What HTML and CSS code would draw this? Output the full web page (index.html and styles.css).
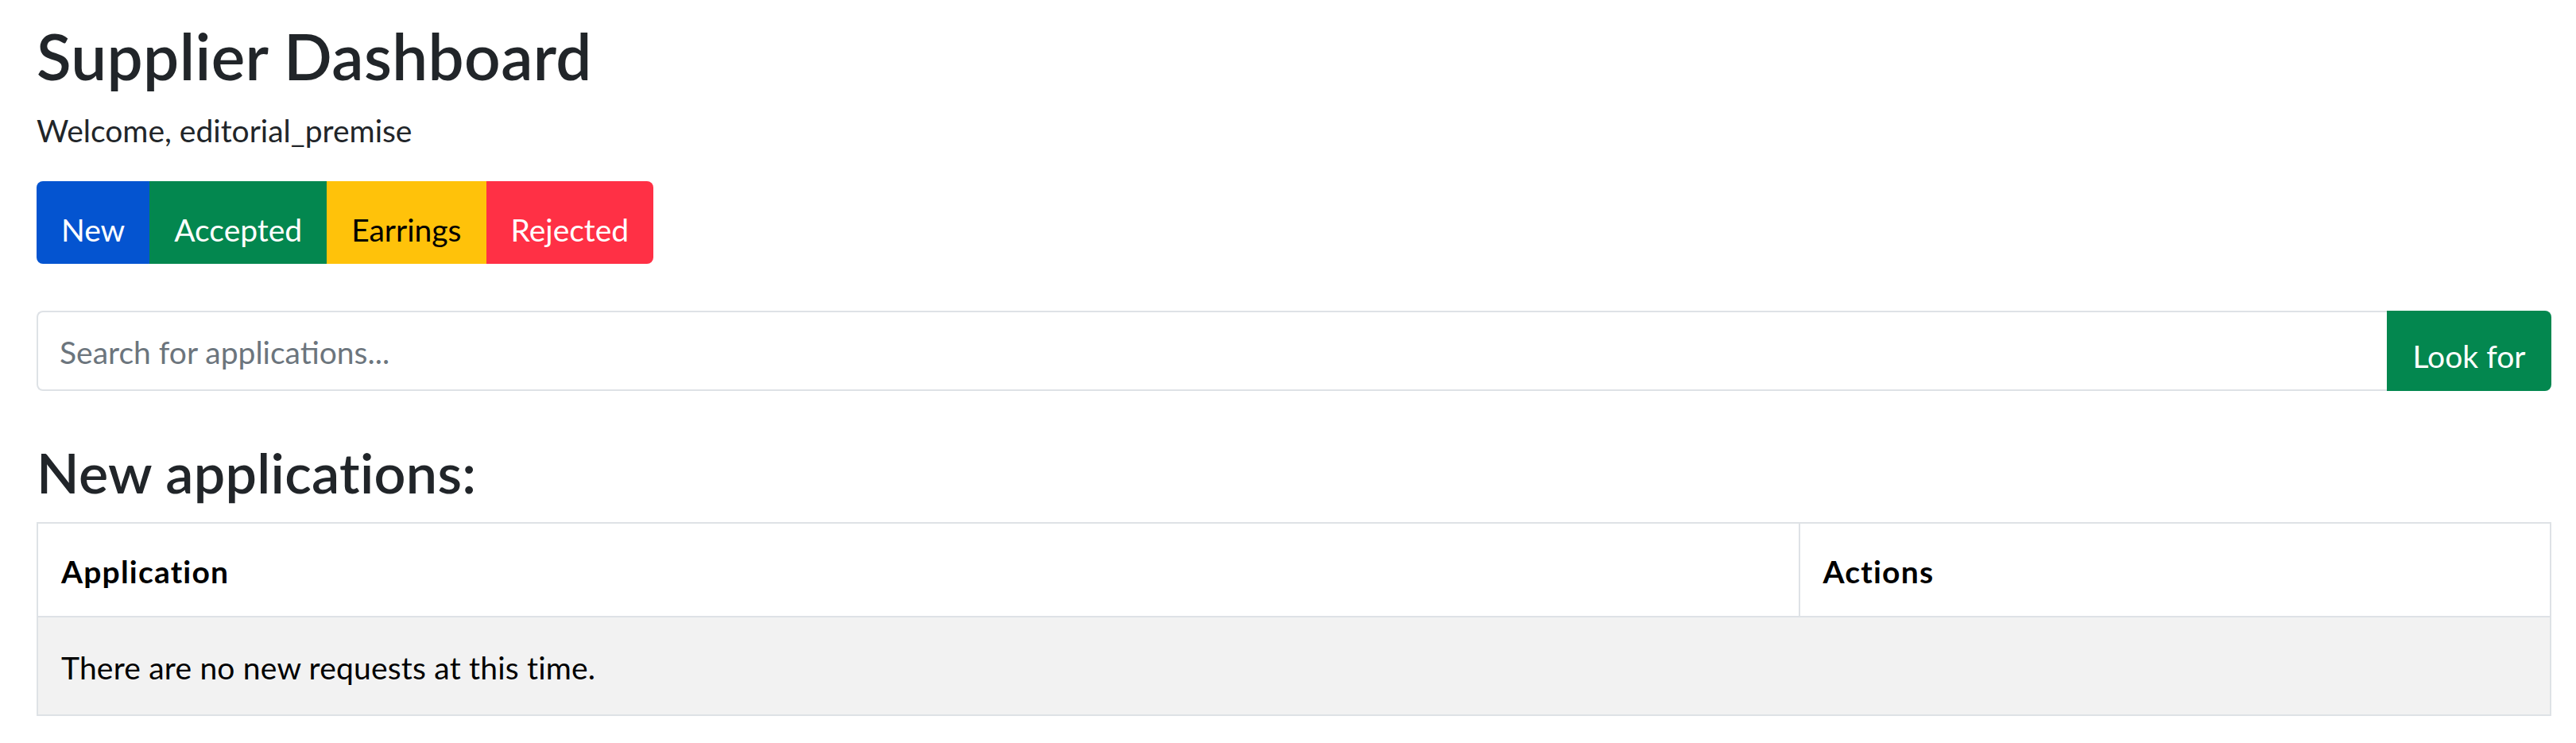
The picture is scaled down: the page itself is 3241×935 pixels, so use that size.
FILE: index.html
```html
<!DOCTYPE html>
<html lang="en">
<head>
<meta charset="utf-8">
<title>Supplier Dashboard</title>
<link rel="stylesheet" href="styles.css">
</head>
<body>
<main class="page">
  <h1 class="title">Supplier Dashboard</h1>
  <p class="welcome">Welcome, editorial_premise</p>
  <div class="btn-group">
    <button class="btn btn-new">New</button>
    <button class="btn btn-accepted">Accepted</button>
    <button class="btn btn-earrings">Earrings</button>
    <button class="btn btn-rejected">Rejected</button>
  </div>
  <form class="search">
    <input class="search-input" type="text" placeholder="Search for applications...">
    <button class="search-btn" type="button">Look for</button>
  </form>
  <h2 class="section-title">New applications:</h2>
  <table class="apps">
    <thead>
      <tr><th class="col-app">Application</th><th>Actions</th></tr>
    </thead>
    <tbody>
      <tr><td colspan="2">There are no new requests at this time.</td></tr>
    </tbody>
  </table>
</main>
</body>
</html>
```
FILE: styles.css
```css
html, body {
  margin: 0;
  padding: 0;
  background: #fff;
}
body {
  font-family: Lato, "Liberation Sans", sans-serif;
  color: #212529;
}
.page {
  padding: 22px 31px 0 46px;
}
.title {
  margin: 0;
  font-size: 80px;
  font-weight: 600;
  letter-spacing: 0.4px;
  line-height: 1.2;
}
.welcome {
  margin: 19px 0 0;
  font-size: 39px;
  line-height: 54px;
}
.btn-group {
  display: flex;
  margin-top: 37px;
}
.btn {
  border: 0;
  margin: 0;
  font-family: inherit;
  font-size: 39px;
  line-height: 52px;
  padding: 35px 31px 17px;
  color: #fff;
}
.btn-new {
  background: #0454d0;
  border-radius: 8px 0 0 8px;
}
.btn-accepted { background: #03874f; }
.btn-earrings { background: #ffc20a; color: #000; }
.btn-rejected {
  background: #ff3045;
  border-radius: 0 8px 8px 0;
}
.search {
  display: flex;
  margin: 59px 0 0;
  height: 101px;
}
.search-input {
  flex: 1;
  box-sizing: border-box;
  height: 101px;
  margin: 0;
  border: 2px solid #dee2e6;
  border-right: 0;
  border-radius: 8px 0 0 8px;
  padding: 2px 27px 0;
  font-family: inherit;
  font-size: 39px;
  color: #212529;
  outline: none;
}
.search-input::placeholder {
  color: #6c757d;
}
.search-btn {
  box-sizing: border-box;
  width: 207px;
  height: 101px;
  border: 0;
  margin: 0;
  padding: 12px 0 0;
  border-radius: 0 8px 8px 0;
  background: #03874f;
  color: #fff;
  font-family: inherit;
  font-size: 39px;
}
.section-title {
  margin: 60px 0 0;
  font-size: 70px;
  font-weight: 600;
  letter-spacing: 0.3px;
  line-height: 1.2;
}
.apps {
  width: 100%;
  margin-top: 21px;
  border-collapse: collapse;
  border: 2px solid #dee2e6;
  font-size: 39px;
}
.apps th, .apps td {
  border: 2px solid #dee2e6;
  text-align: left;
  padding: 4px 29px 0;
}
.apps th {
  height: 112px;
  font-weight: 700;
  letter-spacing: 1.2px;
  color: #000;
}
.col-app {
  width: 70.1%;
}
.apps td {
  height: 118px;
  background: #f2f2f2;
  color: #000;
  letter-spacing: 0.2px;
}
```
